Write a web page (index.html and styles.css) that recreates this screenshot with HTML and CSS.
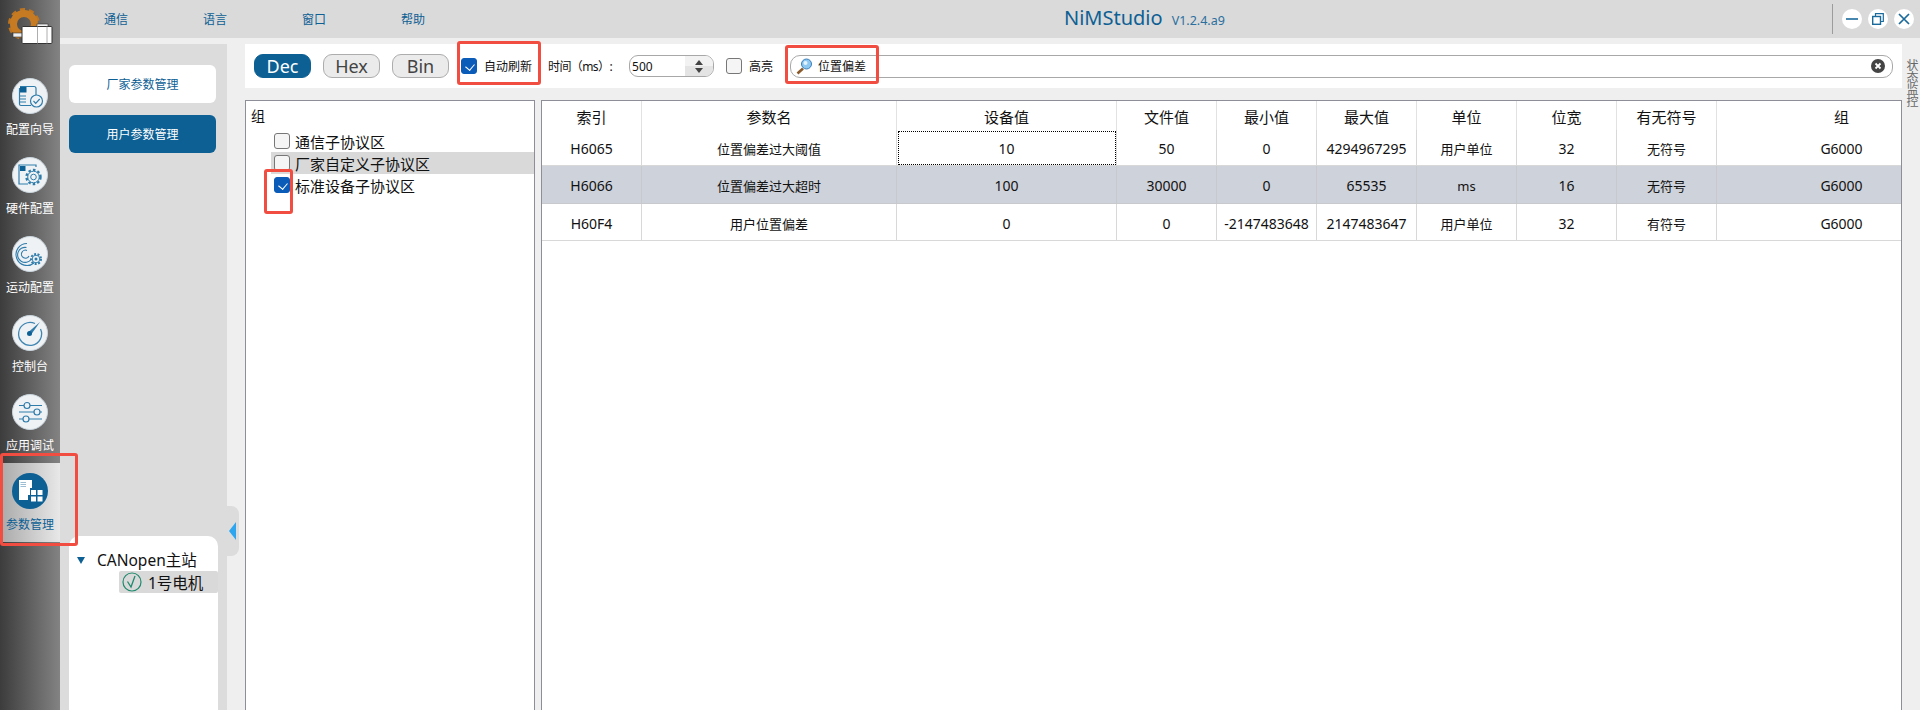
FILE: index.html
```html
<!DOCTYPE html>
<html>

	<head>
		<meta charset="UTF-8">
		<title>NiMStudio</title>
		<link rel="stylesheet" href="styles.css">
	</head>

	<body>
		<div class="page">
			<!--left nav-->
			<div class="nav">
				<div class="logo">
					<svg width="60" height="52" viewBox="0 0 60 52">
						<circle cx="24" cy="24" r="14" fill="none" stroke="#bd7420" stroke-width="4" stroke-dasharray="5 3.8"/>
						<circle cx="24" cy="24" r="10.5" fill="none" stroke="#c67b22" stroke-width="7"/>
						<rect x="13" y="33" width="10" height="4" fill="#eee" stroke="#333" stroke-width=".6"/>
						<rect x="37" y="24" width="11" height="3" fill="#eee" stroke="#333" stroke-width=".6"/>
						<rect x="22" y="26.5" width="30" height="17" rx="1" fill="#fff" stroke="#333"/>
						<path d="M37.5 26.5v17M47 26.5v17" stroke="#999" stroke-width=".8"/>
					</svg>
				</div>
				<div class="navItem">
					<svg class="navIcon" viewBox="0 0 36 36">
						<circle cx="18" cy="18" r="17.5" fill="#eff2f4" stroke="#c9d5dd"/>
						<path d="M8 8.5h14a2 2 0 0 1 2 2v8M19 27.5H9a1.500 1.500 0 0 1-1.500-1.500V10" fill="none" stroke="#2f7cab" stroke-width="1.200"/>
						<rect x="8" y="9" width="6.500" height="5.500" fill="#0d6094"/>
						<path d="M8 18h6M8 21h6M8 24h6" stroke="#2f7cab" stroke-width="1.200"/>
						<circle cx="24.500" cy="23" r="6" fill="#eff2f4" stroke="#2f7cab" stroke-width="1.200"/>
						<path d="M21.500 23l2.200 2.300 4-4.300" fill="none" stroke="#2f7cab" stroke-width="1.200"/>
					</svg>
					<span>配置向导</span>
				</div>
				<div class="navItem">
					<svg class="navIcon" viewBox="0 0 36 36">
						<circle cx="18" cy="18" r="17.500" fill="#eff2f4" stroke="#c9d5dd"/>
						<path d="M24 10V8H7v19h9" fill="none" stroke="#2f7cab" stroke-width="1.200"/>
						<rect x="8" y="9" width="5.500" height="5" fill="#0d6094"/>
						<circle cx="21.500" cy="20" r="7" fill="none" stroke="#2f7cab" stroke-width="2.400" stroke-dasharray="2.500 2.100"/>
						<circle cx="21.500" cy="20" r="5.800" fill="#eff2f4" stroke="#2f7cab"/>
						<circle cx="21.500" cy="20" r="2.800" fill="none" stroke="#2f7cab"/>
					</svg>
					<span>硬件配置</span>
				</div>
				<div class="navItem">
					<svg class="navIcon" viewBox="0 0 36 36">
						<circle cx="18" cy="18" r="17.500" fill="#eff2f4" stroke="#c9d5dd"/>
						<path d="M22 27A11 11 0 1 1 15 7.500M19 23.500A7.500 7.500 0 1 1 14.500 11.500M17 20A4 4 0 1 1 15 14.500" fill="none" stroke="#2f7cab" stroke-width="1.100"/>
						<circle cx="24" cy="23" r="5" fill="none" stroke="#2f7cab" stroke-width="2" stroke-dasharray="2 1.500"/>
						<circle cx="24" cy="23" r="3.800" fill="#eff2f4" stroke="#2f7cab"/>
						<circle cx="24" cy="23" r="1.500" fill="#2f7cab"/>
					</svg>
					<span>运动配置</span>
				</div>
				<div class="navItem">
					<svg class="navIcon" viewBox="0 0 36 36">
						<circle cx="18" cy="18" r="17.500" fill="#eff2f4" stroke="#c9d5dd"/>
						<path d="M23 8.500A11.500 11.500 0 1 0 28.500 14" fill="none" stroke="#3f86b2" stroke-width="1.300"/>
						<path d="M16.500 17L28 7l-8.800 12.500z" fill="#2f7cab"/>
						<circle cx="17.500" cy="18.500" r="2.500" fill="#0d6094"/>
					</svg>
					<span>控制台</span>
				</div>
				<div class="navItem">
					<svg class="navIcon" viewBox="0 0 36 36">
						<circle cx="18" cy="18" r="17.500" fill="#eff2f4" stroke="#c9d5dd"/>
						<path d="M7 11.500h5M18 11.500h12M7 18h15M28 18h2M7 25h4M17 25h13" stroke="#2f7cab" stroke-width="1.200"/>
						<circle cx="15" cy="11.500" r="3" fill="none" stroke="#2f7cab" stroke-width="1.200"/>
						<circle cx="25" cy="18" r="3" fill="none" stroke="#2f7cab" stroke-width="1.200"/>
						<circle cx="14" cy="25" r="3" fill="none" stroke="#2f7cab" stroke-width="1.200"/>
					</svg>
					<span>应用调试</span>
				</div>
				<div class="navItem active">
					<svg class="navIcon" viewBox="0 0 36 36">
						<circle cx="18" cy="18" r="18" fill="#0d6094"/>
						<path d="M7 7h13v8h-2v7h-2v5H7z" fill="#fff"/>
						<path d="M8.500 9.500h5.500M8.500 11.500h5.500M8.500 13.500h5.500" stroke="#9dbdd3"/>
						<path d="M19 17h5v5h-5zM25.500 17h5v5h-5zM19 23.500h5v5h-5zM25.500 23.500h5v5h-5z" fill="#fff"/>
					</svg>
					<span>参数管理</span>
				</div>
			</div>

			<div class="main">
				<!--title bar-->
				<div class="topBar">
					<div class="menu">
						<a>通信</a>
						<a>语言</a>
						<a>窗口</a>
						<a>帮助</a>
					</div>
					<div class="title">NiMStudio<small>V1.2.4.a9</small></div>
					<div class="winBtns">
						<span class="winBtn"><svg width="12" height="12" viewBox="0 0 12 12"><path d="M0 6h12" stroke="#1a6a9c" stroke-width="1.600"/></svg></span>
						<span class="winBtn"><svg width="12" height="12" viewBox="0 0 12 12"><path d="M3.500 3V.7h7.800v7.800H8.800" fill="none" stroke="#1a6a9c" stroke-width="1.200"/><rect x=".7" y="3.500" width="7.800" height="7.800" fill="none" stroke="#1a6a9c" stroke-width="1.400"/></svg></span>
						<span class="winBtn"><svg width="12" height="12" viewBox="0 0 12 12"><path d="M1 1l10 10M11 1L1 11" stroke="#1a6a9c" stroke-width="1.700"/></svg></span>
					</div>
				</div>

				<div class="body">
					<!--second column-->
					<div class="side">
						<button class="sideBtn">厂家参数管理</button>
						<button class="sideBtn on">用户参数管理</button>
						<div class="nodes">
							<div class="nodeRoot"><i class="tri"></i>CANopen主站</div>
							<div class="nodeRow">
								<svg width="20" height="20" viewBox="0 0 20 20">
									<circle cx="10" cy="10" r="9" fill="none" stroke="#1f8a6c" stroke-width="1.200"/>
									<path d="M5.500 9.500l3.500 5.500 4-11" fill="none" stroke="#1f8a6c" stroke-width="1.300"/>
								</svg>
								1号电机
							</div>
						</div>
						<div class="fold"><i></i></div>
					</div>

					<div class="work">
						<div class="toolbar">
							<button class="radix on">Dec</button>
							<button class="radix">Hex</button>
							<button class="radix">Bin</button>
							<label class="check small first"><i class="box on"></i>自动刷新</label>
							<span class="timeLabel">时间（ms）:</span>
							<div class="spin">
								<span>500</span>
								<div class="spinBtns"><i class="up"></i><i class="down"></i></div>
							</div>
							<label class="check small"><i class="box"></i>高亮</label>
							<div class="search">
								<svg width="17" height="17" viewBox="0 0 17 17">
									<path d="M7 10.500L1.500 15.500" stroke="#8a5a2a" stroke-width="2.600"/>
									<circle cx="10.500" cy="6" r="5" fill="#8cc8f0" stroke="#3a7fb8"/>
									<circle cx="9.500" cy="5" r="2" fill="#e2f3fd"/>
								</svg>
								<span>位置偏差</span>
								<svg class="clear" width="14" height="14" viewBox="0 0 14 14">
									<circle cx="7" cy="7" r="7" fill="#444"/>
									<path d="M4.500 4.500l5 5M9.500 4.500l-5 5" stroke="#fff" stroke-width="1.800"/>
								</svg>
							</div>
						</div>

						<div class="panels">
							<div class="tree">
								<div class="treeHead">组</div>
								<label class="check treeRow"><i class="box"></i>通信子协议区</label>
								<label class="check treeRow sel"><i class="box"></i>厂家自定义子协议区</label>
								<label class="check treeRow"><i class="box on"></i>标准设备子协议区</label>
							</div>
							<div class="tableBox">
								<table cellspacing="0">
									<colgroup>
										<col class="c100"><col class="c255"><col class="c220"><col class="c100"><col class="c100">
										<col class="c100"><col class="c100"><col class="c100"><col class="c100"><col class="c250">
									</colgroup>
									<thead>
										<tr>
											<th>索引</th>
											<th>参数名</th>
											<th>设备值</th>
											<th>文件值</th>
											<th>最小值</th>
											<th>最大值</th>
											<th>单位</th>
											<th>位宽</th>
											<th>有无符号</th>
											<th>组</th>
										</tr>
									</thead>
									<tbody>
										<tr>
											<td>H6065</td>
											<td class="cn">位置偏差过大阈值</td>
											<td class="focus">10</td>
											<td>50</td>
											<td>0</td>
											<td>4294967295</td>
											<td class="cn">用户单位</td>
											<td>32</td>
											<td class="cn">无符号</td>
											<td>G6000</td>
										</tr>
										<tr class="hl">
											<td>H6066</td>
											<td class="cn">位置偏差过大超时</td>
											<td>100</td>
											<td>30000</td>
											<td>0</td>
											<td>65535</td>
											<td class="cn">ms</td>
											<td>16</td>
											<td class="cn">无符号</td>
											<td>G6000</td>
										</tr>
										<tr>
											<td>H60F4</td>
											<td class="cn">用户位置偏差</td>
											<td>0</td>
											<td>0</td>
											<td>-2147483648</td>
											<td>2147483647</td>
											<td class="cn">用户单位</td>
											<td>32</td>
											<td class="cn">有符号</td>
											<td>G6000</td>
										</tr>
									</tbody>
								</table>
							</div>
						</div>
					</div>

					<div class="rail">状态监控</div>
				</div>
			</div>

			<!--red marks over the screenshot-->
			<div class="mark markNav"></div>
			<div class="mark markAuto"></div>
			<div class="mark markSearch"></div>
			<div class="mark markCheck"></div>
		</div>
	</body>

</html>
```

FILE: styles.css
```css
* {
	margin: 0;
	padding: 0;
	box-sizing: border-box;
}

html,
body {
	height: 100%;
	overflow: hidden;
}

body {
	font-family: "Noto Sans", "Noto Sans CJK SC", sans-serif;
	font-size: 12px;
	color: #111;
	background: #efefef;
}

button {
	font-family: inherit;
}

.page {
	position: relative;
	display: flex;
	height: 710px;
}

/*left nav*/
.nav {
	width: 60px;
	flex: none;
	background: linear-gradient(to right, #3c3c3c, #838383);
}

.logo {
	height: 68px;
}

.logo svg {
	display: block;
}

.navItem {
	height: 79px;
	padding-top: 10px;
	display: flex;
	flex-direction: column;
	align-items: center;
	color: #fff;
	line-height: 16px;
}

.navIcon {
	width: 36px;
	height: 36px;
	margin-bottom: 8px;
	flex: none;
}

.navItem span {
	white-space: nowrap;
}

.navItem.active {
	background: linear-gradient(to right, #a9a9a9, #e8e8e8);
	color: #0d6094;
}

.main {
	flex: 1;
	min-width: 0;
	display: flex;
	flex-direction: column;
}

/*title bar*/
.topBar {
	height: 38px;
	flex: none;
	position: relative;
	display: flex;
	align-items: center;
	background: #dadada;
}

.menu {
	display: flex;
	padding-left: 44px;
}

.menu a {
	width: 99px;
	color: #0d6094;
	font-size: 12px;
}

.title {
	position: absolute;
	left: 1004px;
	top: 3px;
	font-size: 20px;
	line-height: 30px;
	color: #0d6094;
	white-space: nowrap;
}

.title small {
	font-size: 12.5px;
	margin-left: 9px;
	color: #2a6f9e;
}

.winBtns {
	margin-left: auto;
	height: 30px;
	padding: 0 6px 0 9px;
	display: flex;
	align-items: center;
	gap: 6px;
	border-left: 1px solid #9c9c9c;
}

.winBtn {
	width: 20px;
	height: 20px;
	border-radius: 50%;
	background: #fff;
	display: flex;
	align-items: center;
	justify-content: center;
}

.body {
	flex: 1;
	min-height: 0;
	display: flex;
	padding-top: 6px;
}

/*second column*/
.side {
	width: 167px;
	flex: none;
	position: relative;
	padding: 21px 11px 0 9px;
	display: flex;
	flex-direction: column;
	background: #dcdcdc;
}

.sideBtn {
	width: 147px;
	height: 38px;
	flex: none;
	border: 0;
	border-radius: 6px;
	background: #fff;
	color: #0d6094;
	font-size: 12px;
	margin-bottom: 12px;
}

.sideBtn.on {
	background: #0d6094;
	color: #fff;
}

.nodes {
	margin-top: auto;
	margin-bottom: 0;
	width: 149px;
	height: 174px;
	padding-top: 13px;
	background: #fff;
	border-radius: 10px 10px 0 0;
	font-size: 15.5px;
}

.nodeRoot {
	height: 22px;
	line-height: 22px;
	padding-left: 8px;
	display: flex;
	align-items: center;
	color: #111;
}

.tri {
	width: 0;
	height: 0;
	margin-right: 12px;
	border-left: 4.5px solid transparent;
	border-right: 4.5px solid transparent;
	border-top: 7px solid #0d6094;
}

.nodeRow {
	margin-left: 50px;
	height: 22px;
	display: flex;
	align-items: center;
	gap: 6px;
	padding-left: 3px;
	background: #d9d9d9;
	border-radius: 2px;
}

.fold {
	position: absolute;
	right: -12px;
	top: 462px;
	width: 12px;
	height: 50px;
	background: #dcdcdc;
	border-radius: 0 8px 8px 0;
	display: flex;
	align-items: center;
	padding-left: 2px;
}

.fold i {
	border-top: 9px solid transparent;
	border-bottom: 9px solid transparent;
	border-right: 7px solid #2ea6ef;
}

/*work area*/
.work {
	flex: 1;
	min-width: 0;
	padding-left: 18px;
	display: flex;
	flex-direction: column;
}

.rail {
	width: 18px;
	flex: none;
	padding-top: 15px;
	padding-right: 3px;
	writing-mode: vertical-rl;
	color: #666;
	line-height: 12px;
}

.toolbar {
	height: 44px;
	flex: none;
	display: flex;
	align-items: center;
	padding: 0 9px;
	background: #fff;
}

.radix {
	width: 57px;
	height: 24px;
	margin-right: 12px;
	font-size: 18px;
	line-height: 20px;
	color: #444;
	background: #ebebeb;
	border: 1px solid #adadad;
	border-radius: 9px;
}

.radix.on {
	background: #0d6094;
	border-color: #0d6094;
	color: #fff;
}

.check {
	display: flex;
	align-items: center;
	gap: 7px;
}

.box {
	width: 16px;
	height: 16px;
	flex: none;
	position: relative;
	background: #f5f5f5;
	border: 1px solid #777;
	border-radius: 3px;
}

.box.on {
	background: #0a5cb8;
	border-color: #0a5cb8;
}

.box.on:after {
	content: "";
	position: absolute;
	left: 4.5px;
	top: 3px;
	width: 5px;
	height: 7px;
	border-right: 1px solid #fff;
	border-bottom: 1px solid #fff;
	transform: rotate(40deg);
}

.check.small {
	font-size: 12px;
}

.timeLabel {
	margin-left: 16px;
	width: 81px;
	letter-spacing: -.6px;
	white-space: nowrap;
}

.spin {
	width: 85px;
	height: 22px;
	display: flex;
	align-items: center;
	justify-content: space-between;
	padding-left: 2px;
	border: 1px solid #a8a8a8;
	border-radius: 9px;
	overflow: hidden;
}

.spinBtns {
	width: 28px;
	height: 100%;
	display: flex;
	flex-direction: column;
	align-items: center;
	justify-content: space-around;
	padding: 2px 0;
	background: linear-gradient(#f2f2f2 50%, #e4e4e4 50%);
}

.spinBtns i {
	border-left: 4px solid transparent;
	border-right: 4px solid transparent;
}

.spinBtns .up {
	border-bottom: 5px solid #444;
}

.spinBtns .down {
	border-top: 5px solid #444;
}

.spin + .check {
	margin-left: 12px;
}

.search {
	flex: 1;
	height: 23px;
	margin-left: 17px;
	display: flex;
	align-items: center;
	gap: 5px;
	padding: 0 7px 0 5px;
	background: #fff;
	border: 1px solid #a8a8a8;
	border-radius: 10px;
}

.clear {
	margin-left: auto;
}

/*tree and table*/
.panels {
	flex: 1;
	min-height: 0;
	margin-top: 12px;
	display: flex;
	gap: 6px;
}

.tree {
	width: 290px;
	flex: none;
	padding-left: 1px;
	background: #fff;
	border: 1px solid #8e8e99;
	border-bottom: 0;
	font-size: 15px;
}

.treeHead {
	height: 29px;
	padding-left: 4px;
	line-height: 30px;
	font-size: 14px;
}

.treeRow {
	height: 22px;
	padding-left: 3px;
	margin-left: 24px;
	gap: 5px;
}

.treeRow.sel {
	background: #d9d9d9;
}

.tableBox {
	flex: 1;
	min-width: 0;
	overflow: hidden;
	background: #fff;
	border: 1px solid #8e8e99;
	border-bottom: 0;
}

.tableBox table {
	width: 1425px;
	table-layout: fixed;
	border-collapse: separate;
}

.c100 {
	width: 100px;
}

.c220 {
	width: 220px;
}

.c250 {
	width: 250px;
}

.c255 {
	width: 255px;
}

.tableBox th {
	height: 29px;
	padding-top: 1px;
	font-size: 15px;
	font-weight: 400;
	border-right: 1px solid #e2e2e2;
}

.tableBox td {
	height: 37px;
	padding-top: 2px;
	font-size: 14px;
	text-align: center;
	border-right: 1px solid #d8d8d8;
	border-bottom: 1px solid #d8d8d8;
}

.tableBox tbody tr:first-child td {
	height: 36px;
}

.tableBox td.cn {
	font-size: 13px;
}

.tableBox td.focus {
	outline: 1px dotted #000;
	outline-offset: -2px;
}

.tableBox tr.hl td {
	height: 38px;
	background: #ced2da;
	border-color: #c8c9cc;
}

/*red marks*/
.mark {
	position: absolute;
	border: 3px solid #f24d41;
	border-radius: 3px;
}

.markNav {
	left: 0;
	top: 453px;
	width: 78px;
	height: 93px;
}

.markAuto {
	left: 457px;
	top: 41px;
	width: 84px;
	height: 44px;
}

.markSearch {
	left: 785px;
	top: 45px;
	width: 94px;
	height: 39px;
}

.markCheck {
	left: 264px;
	top: 169px;
	width: 29px;
	height: 45px;
}
```
